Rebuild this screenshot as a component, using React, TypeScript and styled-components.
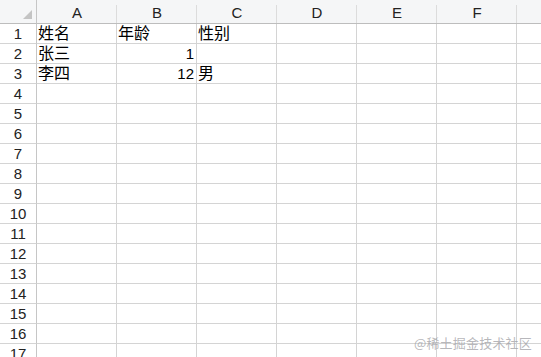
import React from "react";
import styled, { createGlobalStyle } from "styled-components";

const GlobalStyle = createGlobalStyle`
  html, body {
    margin: 0;
    padding: 0;
    background: #ffffff;
    overflow: hidden;
  }
  body {
    font-family: "Liberation Sans", "Noto Sans CJK SC", sans-serif;
  }
`;

const columns = ["A", "B", "C", "D", "E", "F", "G"];

// sheet content, keyed by row number then column letter
const data: Record<number, Record<string, string | number>> = {
  1: { A: "姓名", B: "年龄", C: "性别" },
  2: { A: "张三", B: 1 },
  3: { A: "李四", B: 12, C: "男" },
};

const ROW_COUNT = 17;

const Page = styled.div`
  position: relative;
  width: 541px;
  height: 357px;
  overflow: hidden;
`;

const Sheet = styled.div`
  display: grid;
  grid-template-columns: 37px repeat(7, 80px);
  grid-template-rows: 24px repeat(${ROW_COUNT}, 20px);
`;

const Corner = styled.div`
  position: relative;
  background: #f5f6f7;
  border-right: 1px solid #c6c6c6;
  border-bottom: 1px solid #bdbdbd;
  box-sizing: border-box;

  &::after {
    content: "";
    position: absolute;
    right: 4px;
    bottom: 4px;
    width: 0;
    height: 0;
    border-left: 9px solid transparent;
    border-bottom: 9px solid #c4c4c4;
  }
`;

const ColHead = styled.div`
  position: relative;
  box-sizing: border-box;
  background: #f5f6f7;
  border-bottom: 1px solid #bdbdbd;
  display: flex;
  align-items: center;
  justify-content: center;
  padding-top: 1px;
  font-family: "Liberation Sans", sans-serif;
  font-size: 15px;
  color: #222;

  &::after {
    content: "";
    position: absolute;
    right: 0;
    top: 5px;
    bottom: 0;
    width: 1px;
    background: #dcdcdc;
  }
`;

const RowHead = styled.div`
  box-sizing: border-box;
  background: #ffffff;
  border-right: 1px solid #c6c6c6;
  border-bottom: 1px solid #d4d4d4;
  display: flex;
  align-items: flex-end;
  justify-content: center;
  font-family: "Liberation Sans", sans-serif;
  font-size: 15px;
  line-height: 19px;
  color: #222;
`;

const Cell = styled.div<{ $numeric?: boolean }>`
  box-sizing: border-box;
  border-right: 1px solid #d4d4d4;
  border-bottom: 1px solid #d4d4d4;
  display: flex;
  align-items: flex-end;
  justify-content: ${(p) => (p.$numeric ? "flex-end" : "flex-start")};
  padding: 0 2px 0 1px;
  font-family: "Liberation Sans", "Noto Sans CJK SC", sans-serif;
  font-size: ${(p) => (p.$numeric ? "15px" : "16px")};
  line-height: 19px;
  color: #000;
  white-space: nowrap;
  overflow: hidden;
`;

const Watermark = styled.div`
  position: absolute;
  right: 9px;
  bottom: 7px;
  font-family: "Noto Sans CJK SC", sans-serif;
  font-size: 13px;
  line-height: 14px;
  color: rgba(160, 160, 165, 0.75);
  letter-spacing: 0.2px;
`;

export default function App() {
  const rows = Array.from({ length: ROW_COUNT }, (_, i) => i + 1);

  return (
    <React.Fragment>
      <GlobalStyle />
      <Page>
        <Sheet>
          <Corner />
          {columns.map((c) => (
            <ColHead key={c}>{c}</ColHead>
          ))}
          {rows.map((r) => (
            <React.Fragment key={r}>
              <RowHead>{r}</RowHead>
              {columns.map((c) => {
                const v = data[r]?.[c];
                return (
                  <Cell key={c} $numeric={typeof v === "number"}>
                    {v ?? ""}
                  </Cell>
                );
              })}
            </React.Fragment>
          ))}
        </Sheet>
        <Watermark>@稀土掘金技术社区</Watermark>
      </Page>
    </React.Fragment>
  );
}
